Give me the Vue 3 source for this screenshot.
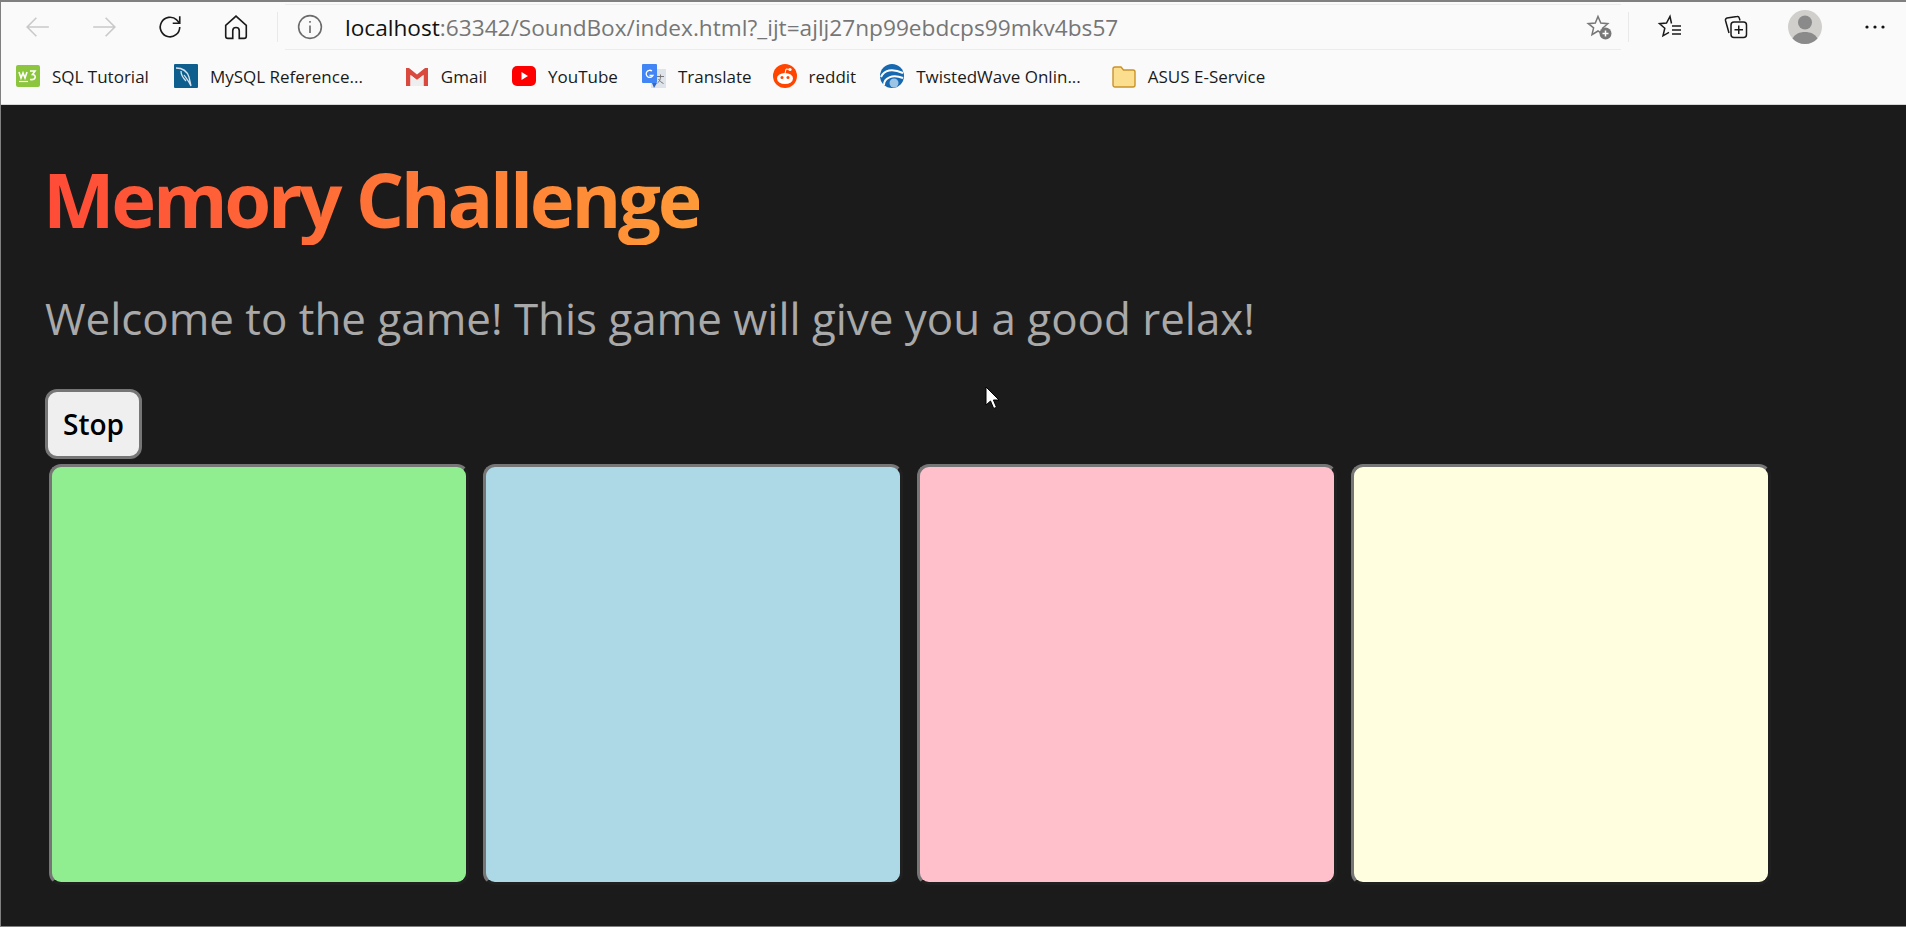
<template>
  <div class="window">
    <!-- browser chrome -->
    <header class="chrome">
      <div class="toolbar">
        <div class="nav">
          <svg class="ic" viewBox="0 0 24 24"><path d="M22 12H2M10.500 3.500 2 12l8.500 8.500" stroke="#c9c9c9" /></svg>
          <svg class="ic" viewBox="0 0 24 24"><path d="M2 12h20M13.500 3.500 22 12l-8.500 8.500" stroke="#c9c9c9" /></svg>
          <svg class="ic" viewBox="0 0 24 24"><path d="M21 12a9 9 0 1 1-2.800-6.500L21 8.500M21 2v6.500h-6.500" stroke="#1a1a1a" /></svg>
          <svg class="ic" viewBox="0 0 24 24"><path d="M2.500 10.500 12 2l9.500 8.500v10a2 2 0 0 1-2 2H15v-7a3 3 0 0 0-6 0v7H4.500a2 2 0 0 1-2-2z" stroke="#1a1a1a" /></svg>
        </div>
        <div class="divider"></div>
        <div class="address">
          <svg class="ic info" viewBox="0 0 24 24">
            <circle cx="12" cy="12" r="10.500" stroke="#6b6b6b" />
            <path d="M12 10.500v7M12 6.500v1.500" stroke="#6b6b6b" />
          </svg>
          <span class="url"><b>localhost</b>:63342/SoundBox/index.html?_ijt=ajlj27np99ebdcps99mkv4bs57</span>
          <svg class="ic star-add" viewBox="0 0 26 26">
            <path d="M12 2.500l2.800 6.600 7 .6-5.300 4.600 1.600 6.900L12 17l-6 3.700 1.600-6.900L2.300 9.700l7-.6z" stroke="#777" />
            <circle cx="19.500" cy="19.500" r="6" fill="#777" />
            <path d="M19.500 16.500v6M16.500 19.500h6" stroke="#fff" />
          </svg>
        </div>
        <div class="divider right"></div>
        <div class="actions">
          <svg class="ic" viewBox="0 0 26 26">
            <path d="M14.500 9.500l-1.500-7-3.500 6.600-7 .6 5.300 4.600L6 21.800l6-3.500" stroke="#1a1a1a" />
            <path d="M15 12h9M15 16h9M15 20h9" stroke="#1a1a1a" />
          </svg>
          <svg class="ic" viewBox="0 0 26 26">
            <path d="M6 19 2.500 6.500a2 2 0 0 1 1.500-2.400l10-1.500a2 2 0 0 1 2.300 1.500l.7 2.400" stroke="#1a1a1a" />
            <rect x="8" y="8" width="15.500" height="15.500" rx="3" stroke="#1a1a1a" />
            <path d="M15.750 11.500v8.500M11.500 15.750H20" stroke="#1a1a1a" />
          </svg>
          <svg class="avatar" viewBox="0 0 34 34">
            <circle cx="17" cy="17" r="17" fill="#d0cfcc" />
            <circle cx="17" cy="12.500" r="7" fill="#8a8a8a" />
            <path d="M4.500 28.500C7 24 11.500 22 17 22s10 2 12.500 6.500A17 17 0 0 1 17 34a17 17 0 0 1-12.500-5.500z" fill="#8a8a8a" />
          </svg>
          <svg class="dots" viewBox="0 0 20 4">
            <circle cx="2" cy="2" r="1.600" />
            <circle cx="10" cy="2" r="1.600" />
            <circle cx="18" cy="2" r="1.600" />
          </svg>
        </div>
      </div>
      <div class="bookmarks">
        <div v-for="b in bookmarks" :key="b.label" class="bookmark" :class="b.cls">
          <svg class="fav" viewBox="0 0 24 24" v-html="b.icon"></svg>
          <span>{{ b.label }}</span>
        </div>
      </div>
    </header>

    <!-- game page -->
    <main class="game">
      <h1 class="title">Memory Challenge</h1>
      <p class="welcome">Welcome to the game! This game will give you a good relax!</p>
      <button class="stop">Stop</button>
      <div class="pads">
        <button v-for="c in pads" :key="c" class="pad" :style="{ background: c }"></button>
      </div>
      <svg class="cursor" viewBox="0 0 15 25">
        <path d="M1 1v18l4.500-4 3.200 7.500 2.800-1.200L8.400 14h5.600z" fill="#fff" stroke="#000" />
      </svg>
    </main>
  </div>
</template>

<script setup>
const pads = ['#90ee90', '#add8e6', '#ffc0cb', '#ffffe0']

const bookmarks = [
  {
    label: 'SQL Tutorial',
    icon: '<rect y="1" width="24" height="22" rx="2" fill="#8cc63f"/><path d="M3 8l2 6 2-5 2 5 2-6M14 7h5l-2.500 3.500c4 0 4 6-2.500 5" stroke="#fff" stroke-width="1.600" fill="none"/><path d="M3 17.500h9" stroke="#fff" stroke-width="1.200"/>'
  },
  {
    label: 'MySQL Reference...',
    cls: 'mysql',
    icon: '<rect width="24" height="24" rx="1" fill="#0f5f8e"/><path d="M2 4c6 0 11 3 13 9l2 9c-2-5-5-8-7-11M7 7c0 5 3 8 5 10" stroke="#d5e4ee" stroke-width="1.300" fill="none"/>'
  },
  {
    label: 'Gmail',
    icon: '<path d="M1 4h3l8 6.500L20 4h3v18h-4.500V11L12 16l-6.500-5v11H1z" fill="#d9493e"/><path d="M5.500 22V11l6.500 5 6.500-5v11z" fill="#eee"/>'
  },
  {
    label: 'YouTube',
    cls: 'tight',
    icon: '<rect y="2" width="24" height="20" rx="5" fill="#f00"/><path d="M9.500 8l6.500 4-6.500 4z" fill="#fff"/>'
  },
  {
    label: 'Translate',
    cls: 'translate',
    icon: '<rect x="9" y="5" width="15" height="19" fill="#dfe3ea"/><rect width="15" height="19" rx="1" fill="#4285f4"/><path d="M10 19h5l-3 5z" fill="#3367c8"/><path d="M10 7a3.600 3.600 0 1 0 1 4.500H7.500" stroke="#fff" stroke-width="1.300" fill="none"/><path d="M15 12.500h7M18.500 10.500v2c0 3-1 5-3 6.500M16.500 15c1 2 3 3.500 5 4.500" stroke="#777" fill="none"/>'
  },
  {
    label: 'reddit',
    cls: 'tight',
    icon: '<circle cx="12" cy="12" r="12" fill="#ff4500"/><ellipse cx="12" cy="14.500" rx="8" ry="5.500" fill="#fff"/><circle cx="9" cy="13.500" r="1.500" fill="#ff4500"/><circle cx="15" cy="13.500" r="1.500" fill="#ff4500"/><circle cx="17" cy="5.500" r="1.600" fill="#fff"/><path d="M12 9.500 13 5l4 .5M9 17c2 1.200 4 1.200 6 0" stroke="#fff" fill="none"/>'
  },
  {
    label: 'TwistedWave Onlin...',
    cls: 'wave',
    icon: '<circle cx="12" cy="12" r="12" fill="#1668b0"/><path d="M1 13C4 6 12 4 23 9" stroke="#fff" stroke-width="2" fill="none"/><path d="M4 21C4 14 12 10 23 14" stroke="#fff" stroke-width="2" fill="none"/><circle cx="14" cy="19" r="4.500" fill="#9cc4e4"/>'
  },
  {
    label: 'ASUS E-Service',
    icon: '<path d="M1 5a2 2 0 0 1 2-2h6l2.500 3H21a2 2 0 0 1 2 2v13a2 2 0 0 1-2 2H3a2 2 0 0 1-2-2z" fill="#fbdf8f" stroke="#c8922a" stroke-width="1.400"/>'
  }
]
</script>

<style>
html,
body {
  margin: 0;
  background: #1b1b1b;
}
</style>

<style scoped>
.window {
  width: 1906px;
  height: 927px;
  box-sizing: border-box;
  border-top: 2px solid #808080;
  border-left: 1px solid #808080;
  border-bottom: 1px solid #808080;
  display: flex;
  flex-direction: column;
  overflow: hidden;
  font-family: "Open Sans", sans-serif;
}

.chrome {
  height: 102px;
  flex: none;
  background: #fafafa;
  border-bottom: 1px solid #d6d6d6;
}

.toolbar {
  height: 50px;
  display: flex;
  align-items: center;
}

.ic {
  width: 26px;
  height: 26px;
  flex: none;
  fill: none;
}

.ic path,
.ic circle:not([fill]),
.ic rect {
  stroke-width: 1.500;
  fill: none;
}

.nav {
  display: flex;
  gap: 40px;
  padding-left: 24px;
  width: 276px;
  box-sizing: border-box;
  align-items: center;
}

.divider {
  width: 1px;
  height: 30px;
  background: #e9e9e9;
}

.divider.right {
  margin-left: 7px;
}

.address {
  width: 1336px;
  height: 46px;
  margin-left: 7px;
  box-sizing: border-box;
  border-top: 1px solid #ececec;
  border-bottom: 1px solid #ececec;
  display: flex;
  align-items: center;
  padding-left: 12px;
}

.url {
  margin-left: 22px;
  font-size: 22.650px;
  color: #767676;
  white-space: nowrap;
}

.url b {
  font-weight: 400;
  color: #111;
}

.star-add {
  margin-left: auto;
  margin-right: 9px;
}

.actions {
  display: flex;
  align-items: center;
  padding-left: 28px;
}

.actions .ic + .ic {
  margin-left: 40px;
}

.avatar {
  width: 34px;
  height: 34px;
  margin-left: 39px;
}

.dots {
  width: 20px;
  height: 4px;
  margin-left: 43px;
  fill: #111;
}

.bookmarks {
  height: 48px;
  display: flex;
  align-items: center;
  padding-left: 15px;
  font-size: 17px;
  color: #1a1a1a;
}

.bookmark {
  display: flex;
  align-items: center;
  gap: 12px;
  margin-right: 25px;
  white-space: nowrap;
}

.bookmark.mysql {
  margin-right: 42px;
}

.bookmark.tight {
  margin-right: 24px;
}

.bookmark.translate {
  margin-right: 21px;
}

.bookmark.wave {
  margin-right: 31px;
}

.fav {
  width: 24px;
  height: 24px;
  flex: none;
}

.game {
  flex: 1;
  position: relative;
  background: #1b1b1b;
  padding: 48px 0 0 44px;
}

.title {
  margin: 0 0 0 -2px;
  font-size: 76px;
  font-weight: 700;
  line-height: 92px;
  letter-spacing: -3.300px;
  width: fit-content;
  background: linear-gradient(90deg, #ff4b37, #ff9a37);
  -webkit-background-clip: text;
  background-clip: text;
  color: transparent;
}

.welcome {
  margin: 43px 0 0;
  font-size: 43.900px;
  line-height: 60px;
  color: #a9a9a9;
  white-space: nowrap;
}

.stop {
  display: block;
  margin-top: 41px;
  width: 97px;
  height: 70px;
  box-sizing: border-box;
  padding: 0;
  border: 3px solid #767676;
  border-radius: 12px;
  background: #efefef;
  font-family: "Open Sans", sans-serif;
  font-size: 28px;
  font-weight: 600;
  color: #000;
}

.pads {
  display: flex;
  gap: 14px;
  margin-left: 4px;
  margin-top: 5px;
}

.pad {
  width: 420px;
  height: 421px;
  box-sizing: border-box;
  padding: 0;
  border: 3px solid;
  border-color: #767676 #202020 #202020 #767676;
  border-radius: 12px;
}

.cursor {
  position: absolute;
  left: 984px;
  top: 281px;
  width: 15px;
  height: 25px;
}
</style>
